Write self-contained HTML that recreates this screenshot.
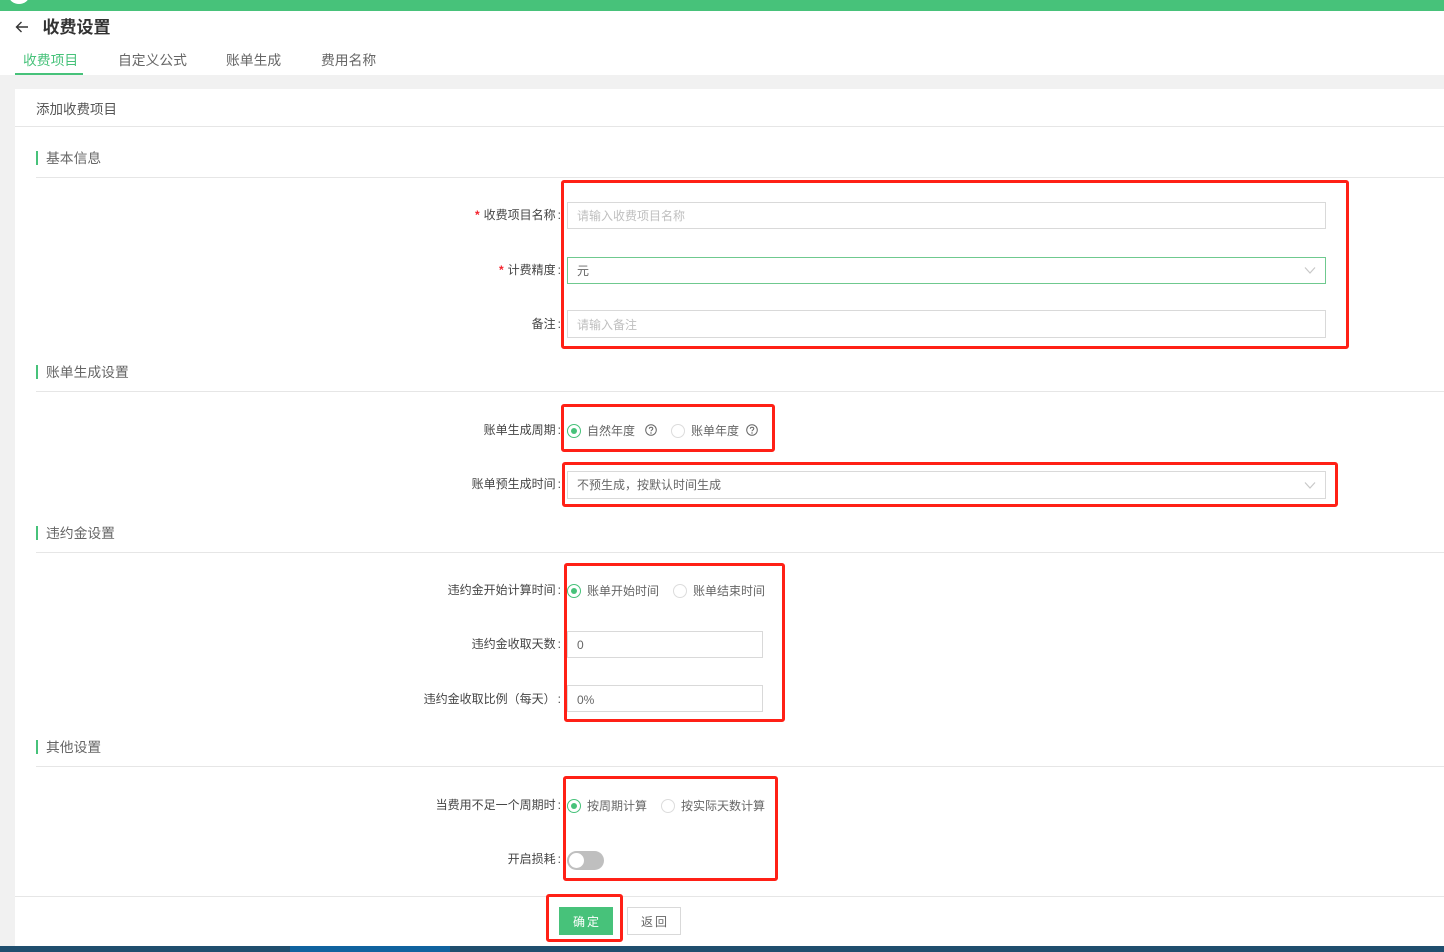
<!DOCTYPE html>
<html lang="zh">
<head>
<meta charset="utf-8">
<title>收费设置</title>
<style>
html,body{margin:0;padding:0}
body{width:1444px;height:952px;position:relative;overflow:hidden;background:#fff;font-family:"Liberation Sans","Noto Sans CJK SC",sans-serif;color:#666;font-size:12px}
div,span{box-sizing:border-box}
.a{position:absolute}
.t{position:absolute;white-space:nowrap;line-height:20px;height:20px}
.lb{position:absolute;white-space:nowrap;line-height:20px;height:20px;right:883px;color:#444;font-size:12px;text-align:right}
.lb i{font-style:normal;font-weight:bold;color:#f5222d;margin-right:4px}
.lb b{font-weight:normal;margin-left:2px}
.sec{position:absolute;left:46px;white-space:nowrap;line-height:20px;font-size:13.8px;color:#666}
.bar{position:absolute;left:36px;width:2px;height:14px;background:#47c27a}
.ln{position:absolute;left:36px;right:0;height:1px;background:#e6e6e6}
.inp{position:absolute;border:1px solid #d9d9d9;background:#fff}
.ph{position:absolute;left:577px;white-space:nowrap;line-height:20px;font-size:12px;color:#bfbfbf}
.val{position:absolute;white-space:nowrap;line-height:20px;font-size:12px;color:#666}
.red{position:absolute;border:3px solid #ff2016;border-radius:3px}
.r{position:absolute;width:14px;height:14px;border-radius:50%;border:1px solid #dcdcdc;background:#fff}
.r.on{border-color:#47c27a}
.r.on:after{content:"";position:absolute;left:3px;top:3px;width:6px;height:6px;border-radius:50%;background:#47c27a}
.tab{position:absolute;top:51px;white-space:nowrap;line-height:20px;font-size:13.8px;color:#666}
</style>
</head>
<body>
<div class="a" style="left:0;top:0;width:1444px;height:11px;background:#47c27a;overflow:hidden">
  <div class="a" style="left:9px;top:-12px;width:20px;height:16px;border-radius:50%;background:#fff"></div>
</div>
<svg class="a" style="left:15px;top:20px" width="14" height="14" viewBox="0 0 14 14"><path d="M13 7H2M6.500 2 1.500 7l5 5" fill="none" stroke="#333" stroke-width="1.400"/></svg>
<div class="t" style="left:42.500px;top:18px;font-size:17px;font-weight:bold;color:#333">收费设置</div>

<div class="tab" style="left:23px;color:#47c27a">收费项目</div>
<div class="tab" style="left:118px">自定义公式</div>
<div class="tab" style="left:226px">账单生成</div>
<div class="tab" style="left:321px">费用名称</div>
<div class="a" style="left:15px;top:73px;width:68px;height:2px;background:#47c27a"></div>

<div class="a" style="left:0;top:75px;width:1444px;height:14px;background:#f1f1f1"></div>
<div class="a" style="left:0;top:89px;width:15px;height:857px;background:#f1f1f1"></div>

<div class="t" style="left:36px;top:100px;font-size:13.500px;color:#555">添加收费项目</div>
<div class="a" style="left:15px;right:0;top:126px;height:1px;background:#e6e6e6"></div>

<div class="bar" style="top:151px"></div>
<div class="sec" style="top:149px">基本信息</div>
<div class="ln" style="top:177px"></div>

<div class="lb" style="top:205px"><i>*</i>收费项目名称<b>:</b></div>
<div class="inp" style="left:567px;top:202px;width:759px;height:27px"></div>
<div class="ph" style="top:206px">请输入收费项目名称</div>

<div class="lb" style="top:260px"><i>*</i>计费精度<b>:</b></div>
<div class="inp" style="left:567px;top:257px;width:759px;height:27px;border-color:#6fc98f"></div>
<div class="val" style="left:577px;top:261px">元</div>
<svg class="a" style="left:1304px;top:266px" width="12" height="9" viewBox="0 0 12 9"><path d="M1 1.500 6 7l5-5.500" fill="none" stroke="#c8c8c8" stroke-width="1.200"/></svg>

<div class="lb" style="top:314px">备注<b>:</b></div>
<div class="inp" style="left:567px;top:310px;width:759px;height:28px"></div>
<div class="ph" style="top:315px">请输入备注</div>

<div class="bar" style="top:365px"></div>
<div class="sec" style="top:363px">账单生成设置</div>
<div class="ln" style="top:391px"></div>

<div class="lb" style="top:420px">账单生成周期<b>:</b></div>
<div class="r on" style="left:567px;top:424px"></div>
<div class="val" style="left:587px;top:421px">自然年度</div>
<svg class="a" style="left:645px;top:424px" width="12" height="12" viewBox="0 0 12 12"><circle cx="6" cy="6" r="5.300" fill="none" stroke="#666"/><path d="M4.300 4.700C4.300 2.700 7.800 2.700 7.800 4.700 7.800 6 6 5.900 6 7.300" fill="none" stroke="#666"/><circle cx="6" cy="9" r=".7" fill="#666"/></svg>
<div class="r" style="left:671px;top:424px"></div>
<div class="val" style="left:691px;top:421px">账单年度</div>
<svg class="a" style="left:746px;top:424px" width="12" height="12" viewBox="0 0 12 12"><circle cx="6" cy="6" r="5.300" fill="none" stroke="#666"/><path d="M4.300 4.700C4.300 2.700 7.800 2.700 7.800 4.700 7.800 6 6 5.900 6 7.300" fill="none" stroke="#666"/><circle cx="6" cy="9" r=".7" fill="#666"/></svg>

<div class="lb" style="top:474px">账单预生成时间<b>:</b></div>
<div class="inp" style="left:567px;top:471px;width:759px;height:28px"></div>
<div class="val" style="left:577px;top:475px">不预生成，按默认时间生成</div>
<svg class="a" style="left:1304px;top:481px" width="12" height="9" viewBox="0 0 12 9"><path d="M1 1.500 6 7l5-5.500" fill="none" stroke="#c8c8c8" stroke-width="1.200"/></svg>

<div class="bar" style="top:526px"></div>
<div class="sec" style="top:524px">违约金设置</div>
<div class="ln" style="top:552px"></div>

<div class="lb" style="top:580px">违约金开始计算时间<b>:</b></div>
<div class="r on" style="left:567px;top:584px"></div>
<div class="val" style="left:587px;top:581px">账单开始时间</div>
<div class="r" style="left:673px;top:584px"></div>
<div class="val" style="left:693px;top:581px">账单结束时间</div>

<div class="lb" style="top:634px">违约金收取天数<b>:</b></div>
<div class="inp" style="left:567px;top:631px;width:196px;height:27px"></div>
<div class="val" style="left:577px;top:635px">0</div>

<div class="lb" style="top:689px">违约金收取比例（每天）<b>:</b></div>
<div class="inp" style="left:567px;top:685px;width:196px;height:27px"></div>
<div class="val" style="left:577px;top:690px">0%</div>

<div class="bar" style="top:740px"></div>
<div class="sec" style="top:738px">其他设置</div>
<div class="ln" style="top:766px"></div>

<div class="lb" style="top:795px">当费用不足一个周期时<b>:</b></div>
<div class="r on" style="left:567px;top:799px"></div>
<div class="val" style="left:587px;top:796px">按周期计算</div>
<div class="r" style="left:661px;top:799px"></div>
<div class="val" style="left:681px;top:796px">按实际天数计算</div>

<div class="lb" style="top:849px">开启损耗<b>:</b></div>
<div class="a" style="left:567px;top:851px;width:37px;height:19px;border-radius:10px;background:#bfbfbf"></div>
<div class="a" style="left:569px;top:853px;width:15px;height:15px;border-radius:50%;background:#fff"></div>

<div class="a" style="left:15px;right:0;top:896px;height:1px;background:#e6e6e6"></div>
<div class="a" style="left:559px;top:907px;width:54px;height:28px;background:#47c27a;color:#fff;text-align:center;line-height:30px;font-size:12px;letter-spacing:2px;padding-left:2px">确定</div>
<div class="a" style="left:627px;top:907px;width:54px;height:28px;border:1px solid #d9d9d9;color:#666;text-align:center;line-height:28px;font-size:12px;letter-spacing:2px;padding-left:2px">返回</div>

<div class="red" style="left:561px;top:180px;width:788px;height:169px"></div>
<div class="red" style="left:561px;top:404px;width:214px;height:48px"></div>
<div class="red" style="left:562px;top:462px;width:776px;height:45px"></div>
<div class="red" style="left:564px;top:563px;width:221px;height:159px"></div>
<div class="red" style="left:563px;top:776px;width:215px;height:105px"></div>
<div class="red" style="left:546px;top:894px;width:77px;height:48px"></div>

<div class="a" style="left:0;top:946px;width:1444px;height:6px;background:#1f4e6e"></div>
<div class="a" style="left:290px;top:946px;width:160px;height:6px;background:#10639f"></div>
</body>
</html>
